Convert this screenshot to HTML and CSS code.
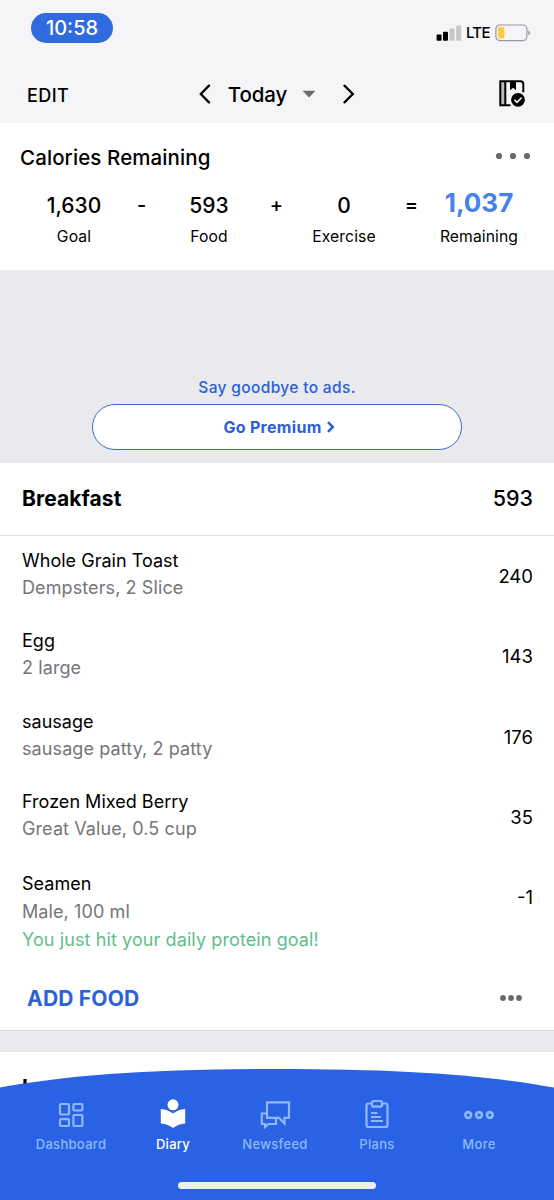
FILE: index.html
```html
<!DOCTYPE html>
<html lang="en">

<head>
    <meta charset="UTF-8">
    <meta name="viewport" content="width=device-width, initial-scale=1.0">
    <title>Diary</title>
    <link rel="stylesheet" href="styles.css">
</head>

<body>
    <div class="screen">
        <header class="top">
            <div class="status">
                <span class="time">10:58</span>
                <div class="status-right">
                    <svg width="26" height="16" viewBox="0 0 26 16">
                        <rect x="0.6" y="9.5" width="5" height="6.3" rx="1" fill="#000" />
                        <rect x="7" y="6.8" width="5" height="9" rx="1" fill="#000" />
                        <rect x="13.6" y="3.6" width="5" height="12.2" rx="1" fill="#c6c6c8" />
                        <rect x="20.2" y="0.4" width="5" height="15.4" rx="1" fill="#c6c6c8" />
                    </svg>
                    <span class="lte">LTE</span>
                    <svg width="36" height="18" viewBox="0 0 36 18">
                        <rect x="0.9" y="1" width="31" height="15.6" rx="4" fill="none" stroke="#98989b" stroke-width="1.2" />
                        <rect x="3" y="3" width="6.4" height="11.6" rx="1.6" fill="#f8cc46" />
                        <path d="M33.4 6.5c2 .8 2 4 0 4.8z" fill="#8e8e91" />
                    </svg>
                </div>
            </div>
            <nav class="nav">
                <span class="edit">EDIT</span>
                <div class="day">
                    <svg width="14" height="20" viewBox="0 0 14 20">
                        <path d="M12 1.6L3.8 10l8.2 8.4" fill="none" stroke="#000" stroke-width="2.3" stroke-linecap="round" />
                    </svg>
                    <span class="today">Today</span>
                    <svg class="caret" width="14" height="8" viewBox="0 0 14 8">
                        <path d="M0.5 0.8h13L7 7.4z" fill="#6b6b6e" />
                    </svg>
                    <svg width="14" height="20" viewBox="0 0 14 20">
                        <path d="M2.5 1.6L10.8 10l-8.3 8.4" fill="none" stroke="#000" stroke-width="2.3" stroke-linecap="round" />
                    </svg>
                </div>
                <svg class="book" width="28" height="29" viewBox="0 0 28 29">
                    <path d="M2.3 2.2h5v24h-5z" fill="#bdbdc0" />
                    <path d="M12.5 26.3H2.3V2.2h20.2a2.8 2.8 0 0 1 2.8 2.8v8.2M7.3 2v24.4" fill="none" stroke="#000" stroke-width="2" />
                    <path d="M12 2h6v9.2l-3-2.4-3 2.4z" fill="#000" />
                    <circle cx="20" cy="20.8" r="6.9" fill="#000" />
                    <path d="M16.4 20.8l2.6 2.6 4.6-5" fill="none" stroke="#fff" stroke-width="1.5" />
                </svg>
            </nav>
        </header>

        <section class="calories">
            <div class="calories-head">
                <h2>Calories Remaining</h2>
                <svg width="36" height="8" viewBox="0 0 36 8" fill="#69696c">
                    <circle cx="4" cy="4" r="3.1" />
                    <circle cx="18" cy="4" r="3.1" />
                    <circle cx="32" cy="4" r="3.1" />
                </svg>
            </div>
            <div class="sum">
                <div class="cell"><b>1,630</b><span>Goal</span></div>
                <div class="op">-</div>
                <div class="cell"><b>593</b><span>Food</span></div>
                <div class="op">+</div>
                <div class="cell"><b>0</b><span>Exercise</span></div>
                <div class="op">=</div>
                <div class="cell"><b class="total">1,037</b><span>Remaining</span></div>
            </div>
        </section>

        <section class="ad">
            <p>Say goodbye to ads.</p>
            <button class="premium">
                <span>Go Premium</span>
                <svg width="9" height="12" viewBox="0 0 9 12">
                    <path d="M2 1.2L6.8 6 2 10.8" fill="none" stroke="#2b5fd9" stroke-width="2.5" />
                </svg>
            </button>
        </section>

        <section class="meal">
            <div class="meal-head">
                <h3>Breakfast</h3>
                <span class="meal-total">593</span>
            </div>
            <ul class="foods">
                <li>
                    <div><p class="name">Whole Grain Toast</p><p class="info">Dempsters, 2 Slice</p></div>
                    <span class="kcal">240</span>
                </li>
                <li>
                    <div><p class="name">Egg</p><p class="info">2 large</p></div>
                    <span class="kcal">143</span>
                </li>
                <li>
                    <div><p class="name">sausage</p><p class="info">sausage patty, 2 patty</p></div>
                    <span class="kcal">176</span>
                </li>
                <li>
                    <div><p class="name">Frozen Mixed Berry</p><p class="info">Great Value, 0.5 cup</p></div>
                    <span class="kcal">35</span>
                </li>
                <li class="tall">
                    <div>
                        <p class="name">Seamen</p>
                        <p class="info">Male, 100 ml</p>
                        <p class="info goal">You just hit your daily protein goal!</p>
                    </div>
                    <span class="kcal">-1</span>
                </li>
            </ul>
            <div class="meal-foot">
                <span class="add">ADD FOOD</span>
                <svg width="24" height="8" viewBox="0 0 24 8" fill="#69696c">
                    <circle cx="4" cy="4" r="2.9" />
                    <circle cx="12" cy="4" r="2.9" />
                    <circle cx="20" cy="4" r="2.9" />
                </svg>
            </div>
        </section>

        <section class="meal next">
            <div class="meal-head">
                <h3>Lunch</h3>
            </div>
        </section>

        <!-- curved tab bar, lies over the list -->
        <footer class="tabbar">
            <svg class="curve" width="554" height="21" viewBox="0 0 554 21">
                <path d="M0 19.5C70 7 150 1 277 1S484 7 554 19.5V21H0z" fill="#2962e4" />
            </svg>
            <div class="tabs">
                <div class="tab">
                    <svg width="32" height="32" viewBox="0 0 32 32" fill="none" stroke="#8db9fb" stroke-width="2.2">
                        <rect x="5" y="5" width="9" height="10.5" rx="1" />
                        <rect x="18.4" y="5" width="9" height="6.5" rx="1" />
                        <rect x="5" y="20.2" width="9" height="6.8" rx="1" />
                        <rect x="18.4" y="16" width="9" height="11" rx="1" />
                    </svg>
                    <span>Dashboard</span>
                </div>
                <div class="tab active">
                    <svg width="32" height="32" viewBox="0 0 32 32" fill="#fff">
                        <circle cx="16" cy="5.8" r="5.5" />
                        <path d="M3.8 10Q10.5 10.3 16 14.5Q21.5 10.3 28.2 10V24.4Q21.5 24.7 16 29Q10.5 24.7 3.8 24.4z" />
                    </svg>
                    <span>Diary</span>
                </div>
                <div class="tab">
                    <svg width="32" height="32" viewBox="0 0 32 32" fill="none" stroke="#8db9fb" stroke-width="2.2">
                        <path d="M8 3.3H30V18.8H25.5V24.5L20 18.8H8z" />
                        <path d="M8 14.5H2.8V25H6V28L9.5 25H17V19.5" />
                    </svg>
                    <span>Newsfeed</span>
                </div>
                <div class="tab">
                    <svg width="32" height="32" viewBox="0 0 32 32" fill="none" stroke="#8db9fb" stroke-width="2.2">
                        <path d="M11 4.5H7.5a2 2 0 0 0-2 2V26a2 2 0 0 0 2 2H24.5a2 2 0 0 0 2-2V6.5a2 2 0 0 0-2-2H21" />
                        <rect x="11" y="2" width="10" height="5.6" rx="1.5" />
                        <path d="M10 14h6.5M10 18h10M10 22h12" stroke-width="1.8" />
                    </svg>
                    <span>Plans</span>
                </div>
                <div class="tab">
                    <svg width="32" height="32" viewBox="0 0 32 32" fill="none" stroke="#8db9fb" stroke-width="2.6">
                        <circle cx="5.2" cy="16" r="2.9" />
                        <circle cx="16" cy="16" r="2.9" />
                        <circle cx="26.8" cy="16" r="2.9" />
                    </svg>
                    <span>More</span>
                </div>
            </div>
            <div class="home"></div>
        </footer>
    </div>
</body>

</html>
```
FILE: styles.css
```css
* {
    box-sizing: border-box;
}

body {
    margin: 0;
    font-family: Inter, "Liberation Sans", sans-serif;
    color: #000;
}

h2,
h3,
p,
ul {
    margin: 0;
    padding: 0;
}

svg {
    display: block;
}

.screen {
    position: relative;
    width: 554px;
    height: 1200px;
    overflow: hidden;
    background-color: #e9e9ee;
}

/* status bar + date picker */
.top {
    height: 123px;
    background-color: #f5f5f8;
}

.status {
    height: 66px;
    padding: 13px 23px 0 31px;
    display: flex;
    justify-content: space-between;
    align-items: flex-start;
}

.time {
    width: 82px;
    height: 30px;
    border-radius: 15px;
    line-height: 31px;
    text-align: center;
    font-size: 20px;
    font-weight: 500;
    color: #fff;
    background-color: #2f6bde;
}

.status-right {
    display: flex;
    align-items: center;
    padding-top: 11px;
}

.lte {
    width: 24px;
    margin: 0 5px 0 4px;
    font-size: 15px;
    font-weight: 500;
    line-height: 18px;
    letter-spacing: -0.7px;
}

.nav {
    height: 57px;
    padding: 0 28px 0 27px;
    display: grid;
    grid-template-columns: 1fr auto 1fr;
    align-items: center;
}

.edit {
    padding-top: 2px;
    font-size: 18px;
    font-weight: 500;
    letter-spacing: 0.4px;
}

.day {
    display: flex;
    align-items: center;
    padding-bottom: 1px;
}

.today {
    margin: 0 15px 0 17px;
    font-size: 20.5px;
    font-weight: 500;
    letter-spacing: -0.1px;
}

.caret {
    margin-right: 26px;
}

.book {
    justify-self: end;
    margin-bottom: 2px;
}

/* calories summary */
.calories {
    height: 147px;
    padding: 22px 0 0;
    background-color: #fff;
}

.calories-head {
    height: 25px;
    padding: 0 23px 0 20px;
    display: flex;
    justify-content: space-between;
    align-items: center;
}

.calories-head h2 {
    font-size: 20.5px;
    font-weight: 500;
    line-height: 25px;
    letter-spacing: 0.1px;
}

.calories-head svg {
    margin-bottom: 4px;
}

.sum {
    display: grid;
    grid-template-columns: 100px 35px 100px 35px 100px 35px 100px;
    margin: 18px 0 0 24px;
}

.cell {
    display: flex;
    flex-direction: column;
    align-items: center;
}

.cell b {
    font-size: 21px;
    font-weight: 500;
    line-height: 35px;
}

.cell .total {
    font-size: 26px;
    font-weight: 700;
    line-height: 30px;
    margin-bottom: 5px;
    color: #4681ee;
}

.cell span {
    font-size: 15.7px;
    line-height: 28px;
    letter-spacing: 0.1px;
}

.op {
    font-size: 20px;
    font-weight: 500;
    line-height: 35px;
    text-align: center;
}

/* ad banner */
.ad {
    height: 193px;
    padding-top: 106px;
    border-top: 1px solid #f1f1f4;
    display: flex;
    flex-direction: column;
    align-items: center;
    color: #2b5fd9;
}

.ad p {
    font-size: 15.5px;
    font-weight: 500;
    line-height: 22px;
    letter-spacing: 0.35px;
}

.premium {
    width: 370px;
    height: 46px;
    margin-top: 5px;
    padding: 0 2px 0 6px;
    display: flex;
    justify-content: center;
    align-items: center;
    gap: 4px;
    border: 1.5px solid #3a68d8;
    border-radius: 23px;
    background-color: #fff;
    color: #2b5fd9;
    font: 700 16px Inter, sans-serif;
    letter-spacing: 0.3px;
}

/* meals */
.meal {
    background-color: #fff;
    border-bottom: 1px solid #d8d8db;
}

.meal-head {
    height: 73px;
    padding: 0 21px 2px 22px;
    display: flex;
    justify-content: space-between;
    align-items: center;
    border-bottom: 1px solid #e0e0e3;
}

.meal-head h3 {
    font-size: 21px;
    font-weight: 700;
    letter-spacing: 0.1px;
}

.meal-total {
    font-size: 21.5px;
    font-weight: 500;
}

.foods {
    list-style: none;
}

.foods li {
    height: 80.4px;
    padding: 11px 21px 0 22px;
    display: flex;
    justify-content: space-between;
}

.name {
    font-size: 18px;
    line-height: 27px;
    letter-spacing: 0.02px;
}

.info {
    font-size: 18px;
    line-height: 27px;
    letter-spacing: 0.1px;
    color: #75757a;
}

.kcal {
    font-size: 18.5px;
    line-height: 27px;
    padding-top: 16px;
}

.foods .tall {
    height: 108px;
    padding-top: 12px;
}

.tall p {
    line-height: 28px;
}

.tall .kcal {
    padding-top: 14px;
}

.foods .goal {
    color: #62be89;
}

.meal-foot {
    height: 64px;
    padding: 1px 31px 0 27px;
    display: flex;
    justify-content: space-between;
    align-items: center;
}

.add {
    font-size: 21px;
    font-weight: 700;
    letter-spacing: 0.2px;
    color: #2b62dc;
}

.next {
    margin-top: 21px;
    height: 148px;
}

.next .meal-head {
    padding-top: 2px;
}

/* tab bar */
.tabbar {
    position: absolute;
    left: 0;
    bottom: 0;
    width: 554px;
}

.tabs {
    height: 111px;
    padding: 10px 24px 0 20px;
    display: grid;
    grid-template-columns: repeat(5, 1fr);
    background-color: #2962e4;
}

.tab {
    display: flex;
    flex-direction: column;
    align-items: center;
    color: #8db9fb;
    font-size: 13px;
    font-weight: 500;
    line-height: 20px;
    letter-spacing: 0.3px;
}

.tab span {
    margin-top: 3px;
}

.active {
    color: #fff;
}

.home {
    position: absolute;
    left: 178px;
    bottom: 11px;
    width: 198px;
    height: 7px;
    border-radius: 4px;
    background-color: #eeeef0;
}
```
